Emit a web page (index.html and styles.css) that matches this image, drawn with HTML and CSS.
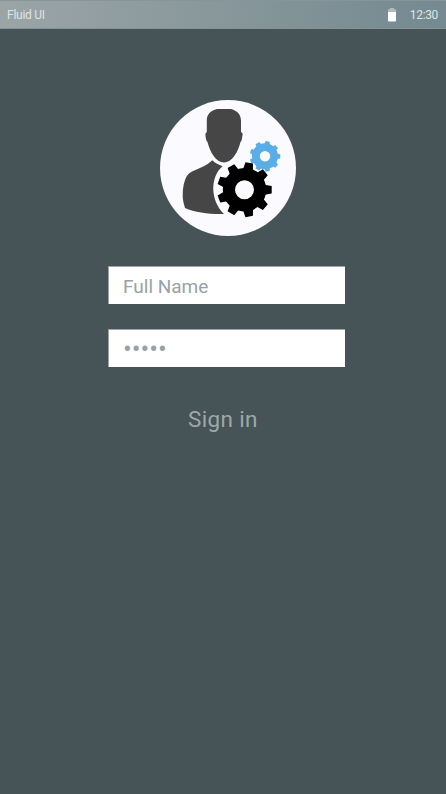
FILE: index.html
```
<!DOCTYPE html>
<html lang="en">
<head>
<meta charset="utf-8">
<title>Sign in</title>
<link rel="stylesheet" href="styles.css">
</head>
<body>
<header class="status">
  <span class="carrier">Fluid UI</span>
  <svg class="battery" viewBox="0 0 8 14"><path fill="#b4babc" d="M2 0h4v1.3h2V4H0V1.3h2z"/><path fill="#fff" d="M0 4h8v8.7a.8.8 0 0 1-.8.8H.8a.8.8 0 0 1-.8-.8z"/></svg>
  <span class="clock">12:30</span>
</header>
<main class="login">
  <svg class="avatar" viewBox="0 0 136 136">
    <defs>
      <path id="tooth" d="M18 -6L21.500 -4.800L27.200 -3.800V3.800L21.500 4.800L18 6z"/>
      <g id="gear">
        <circle r="15.600" fill="none" stroke="currentColor" stroke-width="12.200"/>
        <g fill="currentColor">
          <use href="#tooth"/><use href="#tooth" transform="rotate(40)"/><use href="#tooth" transform="rotate(80)"/>
          <use href="#tooth" transform="rotate(120)"/><use href="#tooth" transform="rotate(160)"/><use href="#tooth" transform="rotate(200)"/>
          <use href="#tooth" transform="rotate(240)"/><use href="#tooth" transform="rotate(280)"/><use href="#tooth" transform="rotate(320)"/>
        </g>
      </g>
    </defs>
    <circle cx="68" cy="68" r="68" fill="#fbfaff"/>
    <g fill="#464646">
      <path d="M57 9H71C78 11 81 15 81 21V32Q83.500 33 82.300 36Q82 41 80.500 42C78 52 72 62.500 64 62.500C56 62.500 50 52 47.500 42Q46 41 45.500 36Q44.800 33 46.800 32V20C47 14 51 10.500 57 9z"/>
      <path d="M52.300 60.300C55 63 59 65 62.500 66.200C50 77 50 100 64 114C49 114.300 35 112.500 25 108Q21 97 23.800 84Q26 74 32 71.500C40 68 47 65.500 52.300 60.300z"/>
    </g>
    <g class="gear-small"><circle cx="105" cy="56.300" r="9.300" fill="none" stroke="currentColor" stroke-width="7.400"/><use href="#gear" transform="translate(105 56.300) scale(.56)"/></g>
    <g class="gear-large"><use href="#gear" transform="translate(84.500 89.700)"/></g>
  </svg>
  <div class="field">Full Name</div>
  <div class="field password">•••••</div>
  <div class="submit">Sign in</div>
</main>
</body>
</html>
```
FILE: styles.css
```
* { box-sizing: border-box; }
body {
  margin: 0;
  min-height: 794px;
  background: #465357;
  font-family: Roboto, sans-serif;
}
.status {
  display: flex;
  align-items: center;
  height: 29px;
  padding: 1px 8px 0 7px;
  border-top: 1px solid #879599;
  border-bottom: 1px solid #839296;
  background: linear-gradient(90deg, #9ba5a6, #748990);
  color: #dfe4e5;
  font-size: 12px;
}
.carrier { flex: 1; letter-spacing: -.25px; }
.battery { width: 8px; height: 14px; margin-right: 14px; }
.clock { line-height: 14px; letter-spacing: -.35px; }
.login {
  display: flex;
  flex-direction: column;
  padding: 71px 0 0 108px;
}
.avatar {
  width: 136px;
  height: 136px;
  margin: 0 0 30px 52px;
}
.gear-small { color: #5aaee6; }
.gear-large { color: #000; }
.field {
  width: 237px;
  height: 38px;
  margin-bottom: 25px;
  padding-left: 14px;
  border: 1px solid #9aa5a7;
  border-width: 1px 0 0 1px;
  background: #fff;
  color: #98a2a5;
  font-size: 19px;
  line-height: 39px;
}
.password { font-size: 26px; line-height: 38px; }
.submit {
  margin: 12px 0 0 80px;
  color: #9da8ab;
  font-size: 22.5px;
  letter-spacing: .35px;
  line-height: 30px;
}
```
